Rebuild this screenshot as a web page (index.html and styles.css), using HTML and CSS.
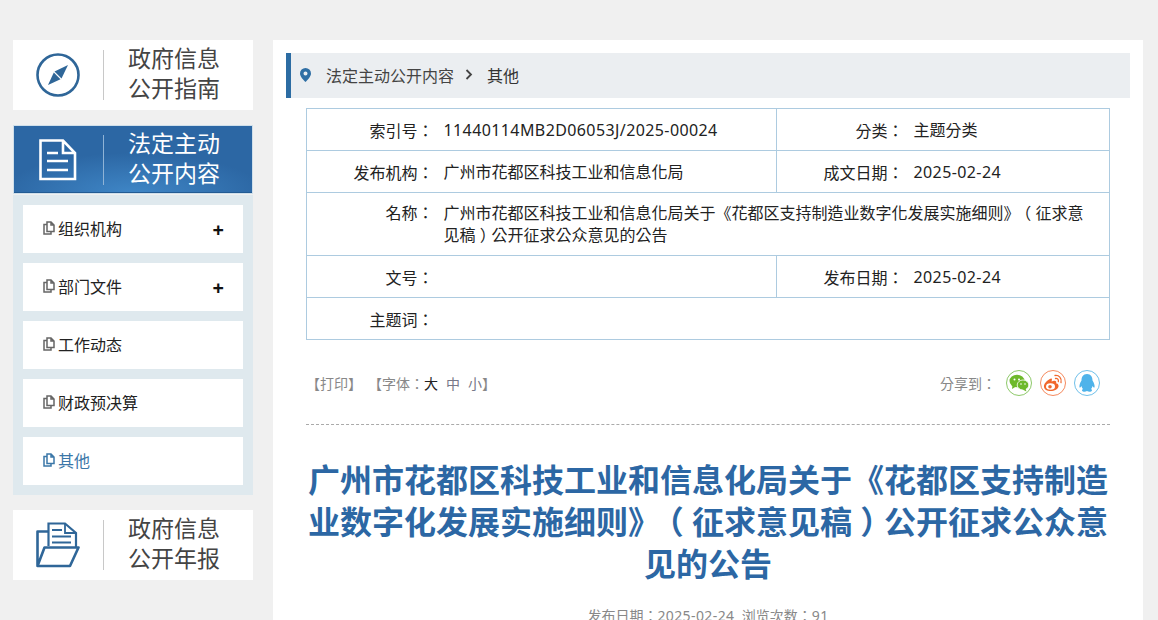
FILE: index.html
```html
<!DOCTYPE html>
<html lang="zh-CN">
<head>
<meta charset="utf-8">
<title>广州市花都区科技工业和信息化局</title>
<link rel="stylesheet" href="styles.css">
</head>
<body>
<div class="page">
  <aside class="side">
    <a class="card">
      <span class="card-icon">
        <svg width="46" height="46" viewBox="0 0 46 46"><circle cx="23" cy="23" r="20.500" fill="none" stroke="#2f6698" stroke-width="2.600"/><path d="M33 13 L19.500 19.500 L26.500 26.500 Z" fill="#2f6698"/><path d="M13 33 L18.800 20.500 L25.500 27.200 Z" fill="#2f6698"/></svg>
      </span>
      <span class="card-text">政府信息<br>公开指南</span>
    </a>
    <a class="card card-on">
      <span class="card-icon">
        <svg width="38" height="42" viewBox="0 0 38 42"><path d="M1.500 1.500 H24 L36 14 V40 H1.500 Z M24 1.500 V14 H36" fill="none" stroke="#fff" stroke-width="2.600"/><path d="M8 14 H19 M8 22 H29 M8 31 H29" stroke="#fff" stroke-width="2.600"/></svg>
      </span>
      <span class="card-text">法定主动<br>公开内容</span>
    </a>
    <ul class="menu">
      <li class="menu-item"><svg class="doc" viewBox="0 0 12 14"><path d="M4 1 H8 L11 4 V10.500 H4 Z M8 1 V4 H11 M4 3.500 H1 V13 H8 V10.500" fill="none" stroke="currentColor" stroke-width="1.500"/></svg>组织机构<b class="plus">+</b></li>
      <li class="menu-item"><svg class="doc" viewBox="0 0 12 14"><path d="M4 1 H8 L11 4 V10.500 H4 Z M8 1 V4 H11 M4 3.500 H1 V13 H8 V10.500" fill="none" stroke="currentColor" stroke-width="1.500"/></svg>部门文件<b class="plus">+</b></li>
      <li class="menu-item"><svg class="doc" viewBox="0 0 12 14"><path d="M4 1 H8 L11 4 V10.500 H4 Z M8 1 V4 H11 M4 3.500 H1 V13 H8 V10.500" fill="none" stroke="currentColor" stroke-width="1.500"/></svg>工作动态</li>
      <li class="menu-item"><svg class="doc" viewBox="0 0 12 14"><path d="M4 1 H8 L11 4 V10.500 H4 Z M8 1 V4 H11 M4 3.500 H1 V13 H8 V10.500" fill="none" stroke="currentColor" stroke-width="1.500"/></svg>财政预决算</li>
      <li class="menu-item menu-on"><svg class="doc" viewBox="0 0 12 14"><path d="M4 1 H8 L11 4 V10.500 H4 Z M8 1 V4 H11 M4 3.500 H1 V13 H8 V10.500" fill="none" stroke="currentColor" stroke-width="1.500"/></svg>其他</li>
    </ul>
    <a class="card">
      <span class="card-icon">
        <svg width="44" height="46" viewBox="0 0 44 46"><path d="M12.500 24 V1.500 H29 L40 11 V25" fill="none" stroke="#2f6698" stroke-width="2.200"/><path d="M29 1.500 V11 H40" fill="none" stroke="#2f6698" stroke-width="1.800"/><path d="M16 8 H26 M16 14.500 H35 M16 20.500 H35" stroke="#2f6698" stroke-width="1.800"/><path d="M12 9.500 H1.500 V44 H34 L42.500 25.500 H8.500 L1.500 44" fill="none" stroke="#2f6698" stroke-width="2.600" stroke-linejoin="round"/></svg>
      </span>
      <span class="card-text">政府信息<br>公开年报</span>
    </a>
  </aside>
  <main class="main">
    <nav class="crumb">
      <svg class="pin" width="11" height="14" viewBox="0 0 11 14"><path fill-rule="evenodd" d="M5.500 0 A5.500 5.500 0 0 1 11 5.500 C11 8.500 7.500 12 5.500 14 C3.500 12 0 8.500 0 5.500 A5.500 5.500 0 0 1 5.500 0 Z M5.500 3.500 A2 2 0 1 0 5.500 7.500 A2 2 0 1 0 5.500 3.500 Z" fill="#2f6fa5"/></svg>
      <span class="crumb-a">法定主动公开内容</span>
      <svg class="chev" width="8" height="11" viewBox="0 0 8 11"><path d="M1.500 1 L6 5.500 L1.500 10" fill="none" stroke="#444" stroke-width="1.800"/></svg>
      <span class="crumb-b">其他</span>
    </nav>
    <div class="article">
      <table class="info" lang="zh-Hant">
        <colgroup><col class="c1"><col class="c2"><col class="c3"><col class="c4"></colgroup>
        <tr><th>索引号：</th><td><span class="num">11440114MB2D06053J/2025-00024</span></td><th>分类：</th><td>主题分类</td></tr>
        <tr><th>发布机构：</th><td>广州市花都区科技工业和信息化局</td><th>成文日期：</th><td><span class="num">2025-02-24</span></td></tr>
        <tr><th class="th-top">名称：</th><td colspan="3">广州市花都区科技工业和信息化局关于《花都区支持制造业数字化发展实施细则》<span class="pl">（</span> 征求意见稿 <span class="pr">）</span>公开征求公众意见的公告</td></tr>
        <tr><th>文号：</th><td></td><th>发布日期：</th><td><span class="num">2025-02-24</span></td></tr>
        <tr><th>主题词：</th><td colspan="3"></td></tr>
      </table>
      <div class="tools" lang="zh-Hant">
        <div class="tools-l">
          <span>【打印】</span>
          <span class="font-set">【字体：<em class="sz-on">大</em><em>中</em><em>小</em>】</span>
        </div>
        <div class="tools-r">
          <span class="share-label">分享到：</span>
          <span class="share s-wx"><svg width="20" height="18" viewBox="0 0 20 18"><ellipse cx="8" cy="7" rx="7.500" ry="6.300" fill="#6eb92b"/><path d="M3.500 11 L3 15 L7 12.500 Z" fill="#6eb92b"/><ellipse cx="14" cy="11" rx="5.800" ry="5" fill="#6eb92b" stroke="#fff" stroke-width=".8"/><path d="M16.500 14.500 L17.500 17.500 L13.500 15.500 Z" fill="#6eb92b"/><circle cx="5.500" cy="5.500" r="1" fill="#fff"/><circle cx="10" cy="5.500" r="1" fill="#fff"/><circle cx="12" cy="10" r=".8" fill="#fff"/><circle cx="16" cy="10" r=".8" fill="#fff"/></svg></span>
          <span class="share s-wb"><svg width="20" height="18" viewBox="0 0 20 18"><path d="M8 4.500 C3.500 6.500 .5 10 1 13 C1.500 16 5 17.500 9 17 C13 16.500 16 14 15.500 11.500 C15.200 10 14 9.500 13 9.300 C13.800 7.500 13 6.500 11 6.700 L8.500 7.500 C9.300 5 9 4 8 4.500 Z" fill="#f1682d"/><ellipse cx="7.500" cy="12.500" rx="4.500" ry="3.200" fill="#fff"/><circle cx="7" cy="12.700" r="1.800" fill="#f1682d"/><path d="M12 1.500 C16 1 19 4 18 8.500 M12.500 4.500 C14.500 4.200 15.800 5.500 15.300 7.500" fill="none" stroke="#f1682d" stroke-width="1.300" stroke-linecap="round"/></svg></span>
          <span class="share s-qq"><svg width="18" height="20" viewBox="0 0 18 20"><path d="M9 1 C5 1 3.500 4 3.500 7.500 C2 10 1 12.500 1.500 14.500 C2.300 14.800 3 13.800 3.500 13 C3.800 14.500 4.500 15.500 5 16 C3.800 16.500 3.500 18 5 18.500 C6.500 19 8 18.500 9 18 C10 18.500 11.500 19 13 18.500 C14.500 18 14.200 16.500 13 16 C13.500 15.500 14.200 14.500 14.500 13 C15 13.800 15.700 14.800 16.500 14.500 C17 12.500 16 10 14.500 7.500 C14.500 4 13 1 9 1 Z" fill="#4fb3ea"/></svg></span>
        </div>
      </div>
      <h1 class="title">广州市花都区科技工业和信息化局关于《花都区支持制造业数字化发展实施细则》<span class="pl">（</span> 征求意见稿 <span class="pr">）</span>公开征求公众意见的公告</h1>
      <p class="meta" lang="zh-Hant">发布日期：<span class="num">2025-02-24</span>&nbsp;&nbsp;浏览次数：<span class="num">91</span></p>
    </div>
  </main>
</div>
</body>
</html>
```
FILE: styles.css
```css
html, body { margin: 0; padding: 0; height: 620px; overflow: hidden; }
body { background: #f0f0f0; font-family: "Noto Sans", "Noto Sans CJK SC", sans-serif; color: #333; text-spacing-trim: space-all; }
.page { display: flex; align-items: flex-start; gap: 20px; padding: 40px 15px 0 13px; }
.side { width: 240px; flex: none; display: flex; flex-direction: column; }
.card { height: 70px; background: #fff; display: flex; align-items: center; box-sizing: border-box; }
.card-icon { width: 90px; height: 50px; border-right: 1px solid #c8c8c8; display: flex; align-items: center; justify-content: center; flex: none; }
.card-text { margin-left: 24px; margin-bottom: 4px; font-size: 23px; line-height: 30px; color: #444; }
.card-on { margin-top: 15px; height: 69px; border: 1px solid #cfdfea; width: 240px; background: radial-gradient(ellipse 55% 60% at 50% 100%, #3f86c6, #2c67a4 100%); box-shadow: inset 0 -1px 0 #235b93; }
.card-on .card-icon { border-right-color: #8fb3d6; padding-right: 1px; box-sizing: content-box; width: 88px; }
.card-on .card-text { color: #fff; }
.menu { list-style: none; margin: 1px 0 15px; padding: 10px; background: #dfe9ee; display: flex; flex-direction: column; gap: 10px; }
.menu-item { height: 48px; box-sizing: border-box; background: #fff; display: flex; align-items: center; padding: 0 20px 2px; font-size: 16px; color: #222; }
.doc { width: 12px; height: 14px; margin-right: 3px; color: #666; flex: none; }
.menu-on { color: #3b77a8; }
.menu-on .doc { color: #3b77a8; }
.plus { margin: 3px -1px 0 auto; font-size: 20px; font-weight: 700; color: #111; line-height: 1; }
.main { flex: 1; background: #fff; padding: 13px 13px 60px; box-sizing: border-box; height: 700px; }
.crumb { height: 45px; box-sizing: border-box; background: #ebeef1; border-left: 5px solid #2c6ca3; display: flex; align-items: center; font-size: 16px; padding: 0 0 2px 9px; }
.pin { margin-right: 15px; }
.crumb-a { color: #444; }
.chev { margin: 0 14px 0 11px; }
.crumb-b { color: #333; }
.article { padding: 10px 20px 0; }
.info { width: 100%; border-collapse: collapse; table-layout: fixed; font-size: 16px; color: #222; font-family: "Noto Sans", "Noto Sans CJK TC", sans-serif; }
.c1 { width: 130px; } .c2 { width: 340px; } .c3 { width: 130px; }
.info th, .info td { border: 1px solid #adcbe0; height: 42px; box-sizing: border-box; font-weight: 400; }
.info th { text-align: right; padding: 0 3px 0 0; vertical-align: middle; border-right: 0; }
.info th.th-top { vertical-align: top; padding-top: 9px; line-height: 22px; }
.info td { padding: 9px 20px 9px 7px; line-height: 22px; border-left: 0; }
.pl { font-feature-settings: "halt"; margin-left: .24em; }
.pr { font-feature-settings: "halt"; margin-right: .24em; }
.num { letter-spacing: .4px; }
.tools { height: 85px; border-bottom: 1px dashed #aaa; display: flex; justify-content: space-between; align-items: flex-start; padding: 30px 10px 0 0; box-sizing: border-box; font-size: 14px; color: #888; font-family: "Noto Sans", "Noto Sans CJK TC", sans-serif; }
.tools-l { display: flex; gap: 6px; line-height: 28px; }
.font-set em { font-style: normal; margin-right: 8px; color: #778; }
.font-set em:nth-of-type(3) { margin-right: 0; }
.sz-on { color: #222 !important; }
.tools-r { display: flex; align-items: center; }
.share-label { margin-right: 2px; }
.share { width: 26px; height: 26px; border-radius: 50%; border: 1px solid; display: flex; align-items: center; justify-content: center; margin-left: 8px; box-sizing: border-box; }
.s-wx { border-color: #8ec96a; }
.s-wb { border-color: #f58a5e; }
.s-qq { border-color: #6fc0ea; }
.title { margin: 34px 0 0; font-size: 32px; line-height: 42px; font-weight: 700; color: #2c67a4; text-align: center; }
.meta { margin: 19px 0 0; font-size: 14px; line-height: 24px; color: #888; text-align: center; font-family: "Noto Sans", "Noto Sans CJK TC", sans-serif; }
```
